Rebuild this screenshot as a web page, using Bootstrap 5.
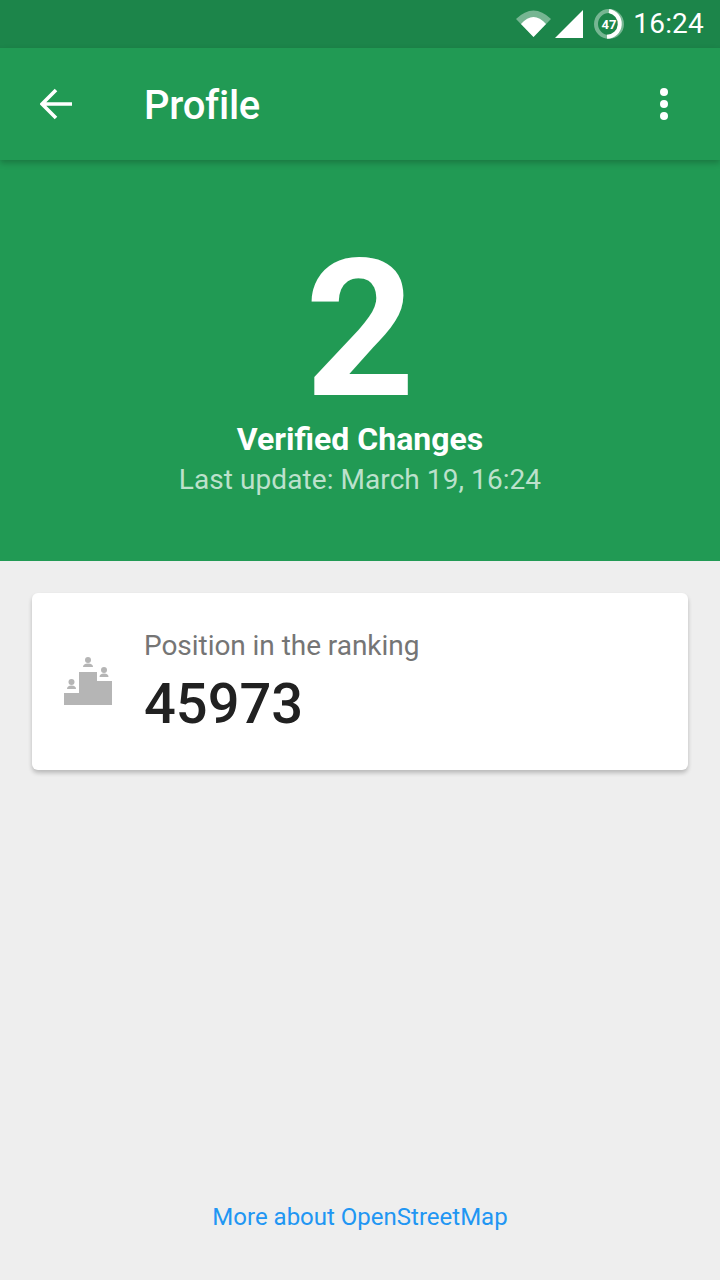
<!DOCTYPE html>
<html lang="en">
<head>
    <meta charset="UTF-8">
    <meta name="viewport" content="width=device-width, initial-scale=1.0">
    <title>Profile</title>
    <link href="https://cdn.jsdelivr.net/npm/bootstrap@5.3.0/dist/css/bootstrap.min.css" rel="stylesheet">
    <style>
        body {
            font-family: Roboto, "Liberation Sans", sans-serif;
            background: #eeeeee;
        }
        .app-screen {
            height: 1280px;
            width: 720px;
        }
        .status-strip {
            height: 48px;
            background: #1c854a;
            color: #fff;
            padding-right: 16px;
        }
        .status-clock {
            font-size: 28px;
            line-height: 48px;
            letter-spacing: .2px;
        }
        .app-toolbar {
            height: 112px;
            background: #219a54;
            color: #fff;
            box-shadow: 0 3px 6px rgba(0,0,0,.22);
            position: relative;
            z-index: 2;
        }
        .toolbar-back {
            width: 144px;
            padding-left: 40px;
        }
        .toolbar-title {
            font-size: 40px;
            font-weight: 500;
            line-height: 112px;
            padding-top: 4px;
            letter-spacing: -.25px;
        }
        .toolbar-more {
            width: 64px;
        }
        .hero-panel {
            height: 401px;
            background: #219a54;
            color: #fff;
            padding-top: 81px;
        }
        .hero-count {
            font-size: 192px;
            font-weight: 700;
            line-height: 178px;
            height: 178px;
        }
        .hero-label {
            font-size: 32px;
            font-weight: 700;
            line-height: 40px;
            margin-bottom: 1px;
        }
        .hero-update {
            font-size: 28px;
            line-height: 40px;
            letter-spacing: .07px;
            color: #bce1cc;
        }
        .rank-card {
            margin: 32px 32px 0;
            height: 177px;
            background: #fff;
            border-radius: 6px;
            box-shadow: 0 3px 4px rgba(0,0,0,.22);
        }
        .rank-icon {
            width: 112px;
            padding-left: 32px;
            padding-bottom: 1px;
        }
        .rank-text {
            padding-top: 2px;
        }
        .rank-label {
            font-size: 28px;
            line-height: 36px;
            letter-spacing: -.05px;
            color: #757575;
        }
        .rank-value {
            font-size: 56px;
            font-weight: 500;
            line-height: 68px;
            margin-top: 6px;
            color: #212121;
        }
        .osm-link {
            font-size: 24px;
            line-height: 32px;
            color: #2196f3;
            text-decoration: none;
            margin-bottom: 47px;
        }
    </style>
</head>
<body>
    <div class="app-screen d-flex flex-column overflow-hidden">
        <div class="status-strip d-flex align-items-center justify-content-end flex-shrink-0">
            <svg width="35" height="30" viewBox="0 0 35 30" class="me-1">
                <path d="M0 10 Q17.500 -7 35 10 L17.500 28 Z" fill="#fff" fill-opacity=".4"/>
                <path d="M5 15 Q17.500 1 30 15 L17.500 28 Z" fill="#fff"/>
            </svg>
            <svg width="30" height="30" viewBox="0 0 30 30" class="me-2">
                <path d="M0 29 L28 1 V29 Z" fill="#fff"/>
            </svg>
            <svg width="32" height="32" viewBox="0 0 32 32" class="me-2">
                <circle cx="16" cy="16" r="13" fill="none" stroke="#fff" stroke-opacity=".4" stroke-width="4"/>
                <path d="M16 3 A13 13 0 0 1 14 28.8" fill="none" stroke="#fff" stroke-width="4"/>
                <text x="16" y="21" text-anchor="middle" font-family="Roboto" font-size="13" font-weight="700" fill="#fff">47</text>
            </svg>
            <span class="status-clock">16:24</span>
        </div>

        <div class="app-toolbar d-flex align-items-center flex-shrink-0">
            <div class="toolbar-back">
                <svg width="32" height="32" viewBox="0 0 32 32" class="d-block">
                    <path d="M32 16 H3 M16 2 L2 16 L16 30" fill="none" stroke="#fff" stroke-width="3.6"/>
                </svg>
            </div>
            <div class="toolbar-title flex-grow-1">Profile</div>
            <div class="toolbar-more">
                <svg width="16" height="32" viewBox="0 0 16 32" class="d-block">
                    <circle cx="8" cy="4" r="4" fill="#fff"/>
                    <circle cx="8" cy="16" r="4" fill="#fff"/>
                    <circle cx="8" cy="28" r="4" fill="#fff"/>
                </svg>
            </div>
        </div>

        <div class="hero-panel text-center flex-shrink-0">
            <div class="hero-count">2</div>
            <div class="hero-label">Verified Changes</div>
            <div class="hero-update">Last update: March 19, 16:24</div>
        </div>

        <div class="rank-card d-flex align-items-center flex-shrink-0">
            <div class="rank-icon">
                <svg width="48" height="48" viewBox="0 0 48 48" class="d-block">
                    <path d="M0 36 H15 V15 H33 V24 H48 V48 H0 Z" fill="#b5b5b5"/>
                    <circle cx="24" cy="3" r="3" fill="#b5b5b5"/>
                    <path d="M19 10 Q19 6.500 24 6.500 Q29 6.500 29 10 Z" fill="#b5b5b5"/>
                    <circle cx="40" cy="13" r="3" fill="#b5b5b5"/>
                    <path d="M35.500 20 Q35.500 16.500 40 16.500 Q44.500 16.500 44.500 20 Z" fill="#b5b5b5"/>
                    <circle cx="7.500" cy="25" r="3" fill="#b5b5b5"/>
                    <path d="M3 32 Q3 28.500 7.500 28.500 Q12 28.500 12 32 Z" fill="#b5b5b5"/>
                </svg>
            </div>
            <div class="rank-text">
                <div class="rank-label">Position in the ranking</div>
                <div class="rank-value">45973</div>
            </div>
        </div>

        <div class="flex-grow-1 d-flex align-items-end justify-content-center">
            <a href="#" class="osm-link">More about OpenStreetMap</a>
        </div>
    </div>

    <script src="https://cdn.jsdelivr.net/npm/bootstrap@5.3.0/dist/js/bootstrap.bundle.min.js"></script>
</body>
</html>
